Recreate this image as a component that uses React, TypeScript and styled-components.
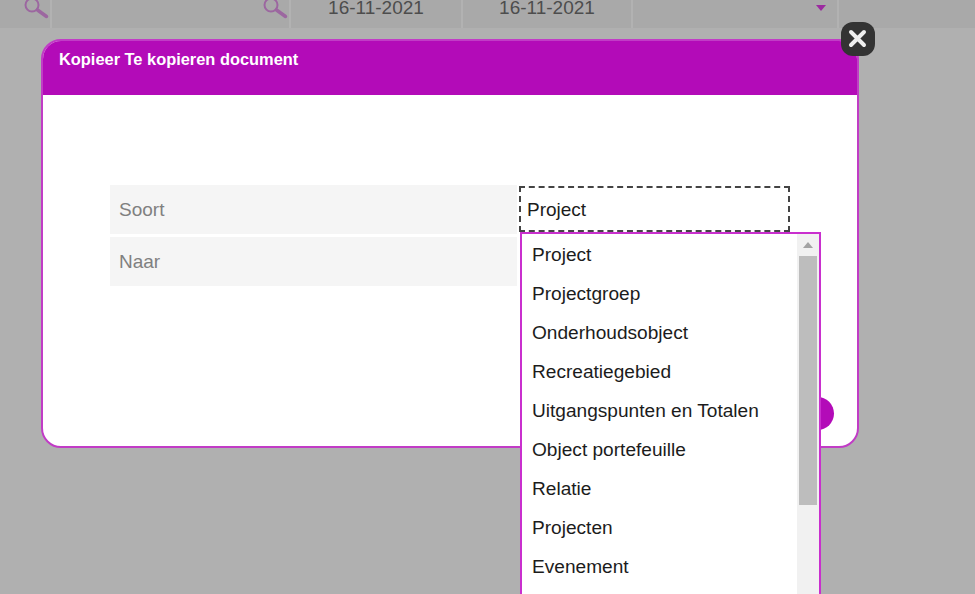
import React from "react";
import styled, { createGlobalStyle } from "styled-components";

const PURPLE = "#b30bb8";
const OPTIONS = [
  "Project",
  "Projectgroep",
  "Onderhoudsobject",
  "Recreatiegebied",
  "Uitgangspunten en Totalen",
  "Object portefeuille",
  "Relatie",
  "Projecten",
  "Evenement",
];

const GlobalStyle = createGlobalStyle`
  html, body {
    margin: 0;
    padding: 0;
    background: #b0b0b0;
    overflow: hidden;
  }
  * {
    box-sizing: border-box;
  }
`;

const Page = styled.div`
  position: relative;
  width: 975px;
  height: 594px;
  overflow: hidden;
  background: #b0b0b0;
  font-family: "Liberation Sans", Arial, sans-serif;
`;

const FilterBar = styled.div`
  display: flex;
  height: 28px;
  gap: 2px;
  background: #b2b2b2;
`;

const FilterCell = styled.div<{ $width?: number; $end?: boolean }>`
  display: flex;
  align-items: flex-start;
  justify-content: ${(p) => (p.$end ? "flex-end" : "center")};
  flex: ${(p) => (p.$width ? `0 0 ${p.$width}px` : "1")};
  background: #a9a9a9;
  color: #4d4d4d;
  font-size: 19px;
  line-height: 16px;
  overflow: hidden;
`;

const SearchIcon = styled.svg`
  width: 28px;
  height: 22px;
`;

const Caret = styled.div`
  width: 0;
  height: 0;
  margin: 5px 11px 0 0;
  border-left: 5px solid transparent;
  border-right: 5px solid transparent;
  border-top: 6px solid #9c2aa0;
`;

const Modal = styled.div`
  position: absolute;
  left: 41px;
  top: 39px;
  width: 818px;
  height: 409px;
  display: flex;
  flex-direction: column;
  background: #ffffff;
  border: 2px solid #c13cc6;
  border-radius: 20px;
  overflow: hidden;
`;

const ModalHeader = styled.div`
  flex: 0 0 55px;
  margin: -1px -1px 0;
  padding: 10px 0 0 17px;
  background: ${PURPLE};
  color: #ffffff;
  font-size: 16.4px;
  font-weight: 700;
  line-height: 18px;
`;

const ModalBody = styled.div`
  flex: 1;
  position: relative;
  padding: 90px 0 0 67px;
`;

const FormGrid = styled.div`
  display: grid;
  grid-template-columns: 407px 271px;
  grid-auto-rows: 49px;
  gap: 3px 2px;
`;

const Label = styled.div`
  display: flex;
  align-items: center;
  padding-left: 9px;
  background: #f5f5f5;
  color: #808080;
  font-size: 19px;
`;

const SelectValue = styled.div`
  display: flex;
  align-items: center;
  height: 46px;
  margin-top: 1px;
  padding: 1px 0 0 6px;
  border: 2px dashed #444444;
  color: #1c1c1c;
  font-size: 19px;
`;

const SaveButton = styled.div`
  position: absolute;
  right: 23px;
  top: 302px;
  width: 60px;
  height: 33px;
  border-radius: 17px;
  background: ${PURPLE};
`;

const Dropdown = styled.div`
  position: absolute;
  left: 520px;
  top: 232px;
  width: 301px;
  height: 380px;
  display: flex;
  background: #ffffff;
  border: 2px solid #c92fce;
`;

const OptionList = styled.ul`
  flex: 1;
  margin: 0;
  padding: 1px 0 0 10px;
  list-style: none;
`;

const Option = styled.li`
  height: 39px;
  line-height: 39px;
  color: #1c1c1c;
  font-size: 19.1px;
  white-space: nowrap;
`;

const ScrollTrack = styled.div`
  flex: 0 0 22px;
  position: relative;
  background: #f1f1f1;
`;

const ScrollArrow = styled.div`
  position: absolute;
  left: 6px;
  top: 8px;
  width: 0;
  height: 0;
  border-left: 5px solid transparent;
  border-right: 5px solid transparent;
  border-bottom: 6px solid #a3a3a3;
`;

const ScrollThumb = styled.div`
  position: absolute;
  left: 2px;
  right: 2px;
  top: 22px;
  height: 249px;
  background: #bdbdbd;
`;

const CloseButton = styled.div`
  position: absolute;
  left: 841px;
  top: 22px;
  width: 34px;
  height: 34px;
  display: flex;
  align-items: center;
  justify-content: center;
  border-radius: 12px;
  background: #333333;
`;

const Search = () => (
  <SearchIcon viewBox="0 0 28 22" fill="none">
    <circle cx="10" cy="5" r="6.5" stroke="#9c67a0" strokeWidth="2" />
    <path d="M15.5 10 L24.5 16.5" stroke="#9c67a0" strokeWidth="3.5" strokeLinecap="round" />
  </SearchIcon>
);

const App = () => (
  <Page>
    <GlobalStyle />
    <FilterBar>
      <FilterCell $width={50} $end>
        <Search />
      </FilterCell>
      <FilterCell $width={237} $end>
        <Search />
      </FilterCell>
      <FilterCell $width={170}>16-11-2021</FilterCell>
      <FilterCell $width={168}>16-11-2021</FilterCell>
      <FilterCell $width={204} $end>
        <Caret />
      </FilterCell>
      <FilterCell />
    </FilterBar>
    <Modal>
      <ModalHeader>Kopieer Te kopieren document</ModalHeader>
      <ModalBody>
        <FormGrid>
          <Label>Soort</Label>
          <SelectValue>Project</SelectValue>
          <Label>Naar</Label>
        </FormGrid>
        <SaveButton />
      </ModalBody>
    </Modal>
    <Dropdown>
      <OptionList>
        {OPTIONS.map((option) => (
          <Option key={option}>{option}</Option>
        ))}
      </OptionList>
      <ScrollTrack>
        <ScrollArrow />
        <ScrollThumb />
      </ScrollTrack>
    </Dropdown>
    <CloseButton>
      <svg width="22" height="22" viewBox="0 0 22 22">
        <path d="M4 4 L17 17 M17 4 L4 17" stroke="#eeeeee" strokeWidth="4" strokeLinecap="round" />
      </svg>
    </CloseButton>
  </Page>
);

export default App;
